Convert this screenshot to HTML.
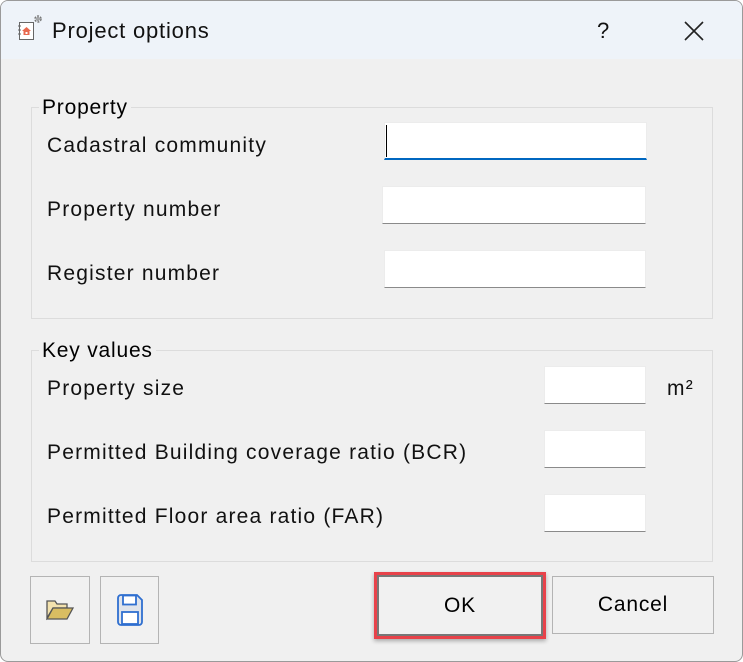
<!DOCTYPE html>
<html><head><style>
body{margin:0;width:743px;height:662px;background:#fff;font-family:"Liberation Sans","DejaVu Sans",sans-serif;position:relative;overflow:hidden}
.win{position:absolute;left:0;top:0;width:741px;height:660px;border:1px solid #9a9a9a;border-radius:8px;background:#f0f0f0;overflow:hidden}
.title{position:absolute;left:0;top:0;width:741px;height:58px;background:#eef3f9}
.t{position:absolute;font-size:22px;color:#111;white-space:nowrap}
.f{font-size:21px;letter-spacing:1.2px}
.frame{position:absolute;border:1px solid #dcdcdc}
.lbl{position:absolute;background:#f0f0f0;padding:0 3px;font-size:21px;letter-spacing:0.8px}
.in{position:absolute;background:#fff;border:1px solid #ececec;border-bottom:1px solid #8a8a8a;box-sizing:border-box}
.btn{position:absolute;background:#f1f1f1;border:1px solid #b4b4b4;box-sizing:border-box;display:flex;align-items:center;justify-content:center;font-size:21px;letter-spacing:0.8px}
</style></head><body>
<div class="win">
<div class="title"></div>
<svg style="position:absolute;left:16px;top:13px" width="30" height="30" viewBox="0 0 30 30">
<rect x="2.5" y="8.5" width="14" height="17" fill="#fff" stroke="#666"/>
<line x1="1" y1="12" x2="4" y2="12" stroke="#666"/><line x1="1" y1="16" x2="4" y2="16" stroke="#666"/><line x1="1" y1="20" x2="4" y2="20" stroke="#666"/>
<path d="M5 17 L9.5 13 L14 17 Z" fill="#e8694f"/><rect x="6.5" y="17" width="6" height="4" fill="#e8694f"/><rect x="8.5" y="18" width="2" height="2" fill="#fff"/>
<circle cx="21" cy="5" r="3" fill="none" stroke="#777" stroke-width="1.5" stroke-dasharray="2 1.2"/><circle cx="21" cy="5" r="1.2" fill="none" stroke="#777"/>
</svg>
<div class="t" style="left:51px;top:17px;letter-spacing:0.8px">Project options</div>
<div class="t" style="left:596px;top:17px">?</div>
<svg style="position:absolute;left:682px;top:19px" width="22" height="22"><path d="M2 2L20 20M20 2L2 20" stroke="#222" stroke-width="1.6"/></svg>

<div class="frame" style="left:30px;top:106px;width:680px;height:210px"></div>
<div class="lbl" style="left:38px;top:95px">Property</div>
<div class="t f" style="left:46px;top:133px">Cadastral community</div>
<div class="t f" style="left:46px;top:197px">Property number</div>
<div class="t f" style="left:46px;top:261px">Register number</div>
<div class="in" style="left:383px;top:121px;width:263px;height:38px;border-bottom:2px solid #0067c0"></div>
<div style="position:absolute;left:385px;top:124px;width:1px;height:32px;background:#000"></div>
<div class="in" style="left:381px;top:185px;width:264px;height:38px"></div>
<div class="in" style="left:383px;top:249px;width:262px;height:38px"></div>

<div class="frame" style="left:30px;top:349px;width:680px;height:210px"></div>
<div class="lbl" style="left:38px;top:338px">Key values</div>
<div class="t f" style="left:46px;top:376px">Property size</div>
<div class="t f" style="left:46px;top:440px">Permitted Building coverage ratio (BCR)</div>
<div class="t f" style="left:46px;top:504px">Permitted Floor area ratio (FAR)</div>
<div class="in" style="left:543px;top:365px;width:102px;height:38px"></div>
<div class="in" style="left:543px;top:429px;width:102px;height:38px"></div>
<div class="in" style="left:543px;top:493px;width:102px;height:38px"></div>
<div class="t f" style="left:666px;top:376px">m²</div>

<div class="btn" style="left:29px;top:575px;width:60px;height:68px">
<svg width="28" height="24" viewBox="0 0 28 24"><path d="M1 3h8l2 3h10v4H7L1 20Z" fill="#f3e2ae" stroke="#555" stroke-width="1.3"/><path d="M1 21L7 10h20l-6 11Z" fill="#d9bd62" stroke="#555" stroke-width="1.3"/></svg></div>
<div class="btn" style="left:99px;top:575px;width:59px;height:68px">
<svg width="26" height="32" viewBox="0 0 26 32"><path d="M4 1h16l5 5v22a3 3 0 0 1-3 3H4a3 3 0 0 1-3-3V4a3 3 0 0 1 3-3Z" fill="#dfe3ea" stroke="#2f6fd0" stroke-width="1.8"/><rect x="6" y="1.5" width="13" height="9" fill="#fff" stroke="#2f6fd0" stroke-width="1.8"/><rect x="5" y="18" width="16" height="12" fill="#fff" stroke="#2f6fd0" stroke-width="1.8"/></svg></div>
<div style="position:absolute;left:373px;top:571px;width:172px;height:67px;border:3px solid #e8424a;box-sizing:border-box;box-shadow:0 2px 4px rgba(0,0,0,.3)"></div>
<div class="btn" style="left:376px;top:574px;width:166px;height:61px;border:2px solid #777">OK</div>
<div class="btn" style="left:551px;top:575px;width:162px;height:58px">Cancel</div>
</div>
</body></html>
